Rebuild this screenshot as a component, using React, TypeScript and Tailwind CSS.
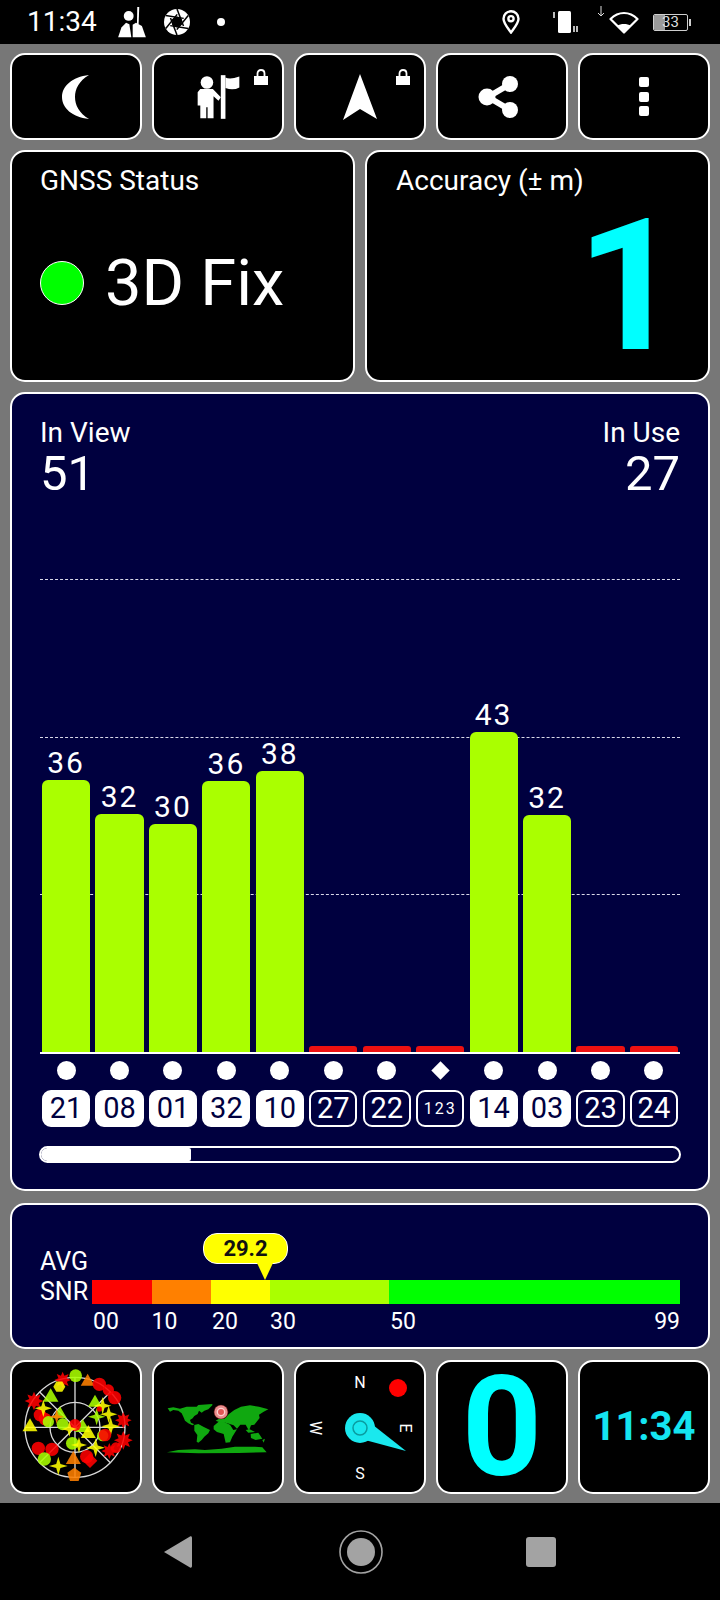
import React from "react";

const BARS = [
  { prn: "21", snr: 36, h: 272, used: true },
  { prn: "08", snr: 32, h: 238, used: true },
  { prn: "01", snr: 30, h: 228, used: true },
  { prn: "32", snr: 36, h: 271, used: true },
  { prn: "10", snr: 38, h: 281, used: true },
  { prn: "27", h: 6, used: false },
  { prn: "22", h: 6, used: false },
  { prn: "123", h: 6, used: false, diamond: true },
  { prn: "14", snr: 43, h: 320, used: true },
  { prn: "03", snr: 32, h: 237, used: true },
  { prn: "23", h: 6, used: false },
  { prn: "24", h: 6, used: false },
];

const LIME = "#aaff00";
const RED = "#ff0000";
const ORANGE = "#ff8000";
const YELLOW = "#ffff00";

type Sat = [string, number, number, number, string];

// sky plot positions, in 3x crop coordinates
const SATS: Sat[] = [
  ["c", 197, 32, 19, LIME],
  ["t", 233, 50, 24, ORANGE],
  ["x", 158, 45, 25, RED],
  ["h", 148, 65, 18, YELLOW],
  ["c", 268, 58, 20, RED],
  ["c", 295, 75, 17, RED],
  ["c", 314, 98, 20, RED],
  ["t", 122, 97, 27, LIME],
  ["x", 72, 108, 28, RED],
  ["t", 255, 113, 24, LIME],
  ["c", 90, 150, 19, RED],
  ["c", 105, 162, 19, RED],
  ["c", 115, 170, 17, LIME],
  ["t", 150, 148, 24, LIME],
  ["s", 100, 130, 26, YELLOW],
  ["s", 140, 155, 22, ORANGE],
  ["c", 158, 178, 18, LIME],
  ["t", 218, 188, 26, LIME],
  ["c", 195, 180, 18, RED],
  ["s", 178, 192, 23, YELLOW],
  ["t", 60, 186, 26, YELLOW],
  ["s", 260, 155, 26, LIME],
  ["s", 278, 122, 26, YELLOW],
  ["c", 268, 132, 8, RED],
  ["s", 296, 148, 26, YELLOW],
  ["x", 340, 166, 25, RED],
  ["s", 302, 184, 28, YELLOW],
  ["c", 278, 212, 17, LIME],
  ["c", 285, 210, 19, RED],
  ["t", 235, 206, 26, YELLOW],
  ["c", 187, 235, 19, LIME],
  ["s", 207, 240, 24, YELLOW],
  ["c", 85, 250, 20, RED],
  ["c", 126, 253, 20, RED],
  ["c", 103, 282, 20, LIME],
  ["s", 145, 303, 28, YELLOW],
  ["t", 190, 284, 26, ORANGE],
  ["p", 193, 330, 22, ORANGE],
  ["c", 230, 275, 20, RED],
  ["d", 240, 287, 22, RED],
  ["s", 257, 248, 28, YELLOW],
  ["x", 298, 258, 24, RED],
  ["c", 318, 248, 16, RED],
  ["x", 340, 226, 28, RED],
];

function polar(n: number, cx: number, cy: number, r: number, inner: number, start = -90) {
  const pts: string[] = [];
  const total = inner ? n * 2 : n;
  for (let i = 0; i < total; i++) {
    const rr = inner && i % 2 === 1 ? inner : r;
    const a = ((start + (360 / total) * i) * Math.PI) / 180;
    pts.push(`${(cx + rr * Math.cos(a)).toFixed(1)},${(cy + rr * Math.sin(a)).toFixed(1)}`);
  }
  return pts.join(" ");
}

function SatShape({ sat }: { sat: Sat }) {
  const [kind, x, y, r, color] = sat;
  if (kind === "c") return <circle cx={x} cy={y} r={r} fill={color} fillOpacity={0.88} />;
  const pts =
    kind === "t" ? polar(3, x, y, r, 0)
    : kind === "x" ? polar(8, x, y, r, r * 0.55)
    : kind === "s" ? polar(4, x, y, r, r * 0.32)
    : kind === "p" ? polar(5, x, y, r, 0)
    : kind === "h" ? polar(6, x, y, r, 0, 0)
    : polar(4, x, y, r, 0);
  return <polygon points={pts} fill={color} fillOpacity={0.88} />;
}

function SkyPlot() {
  return (
    <svg viewBox="0 0 128 130" className="h-[130px] w-[128px]">
      <g transform="translate(-2 3) scale(0.3333)" fill="none" stroke="#d8d8d8" strokeWidth="4">
        <circle cx="195" cy="187" r="150" />
        <circle cx="195" cy="187" r="75" />
        <path d="M195 37V337M45 187H345M89 81L301 293M301 81L89 293" />
        {SATS.map((s, i) => (
          <g key={i} stroke="none">
            <SatShape sat={s} />
          </g>
        ))}
      </g>
    </svg>
  );
}

function WorldMap() {
  return (
    <svg viewBox="0 0 128 130" className="h-[130px] w-[128px]">
      <g transform="translate(1 28) scale(0.3333)" fill="#10a810">
        <polygon points="38,55 55,52 75,56 95,50 125,50 130,45 172,42 172,46 160,58 148,62 140,68 132,62 128,72 118,78 113,85 105,90 108,98 118,103 112,106 100,100 90,92 85,80 80,70 70,62 55,60 45,65" />
        <polygon points="118,105 130,102 145,110 165,120 160,130 148,140 140,150 130,158 125,155 127,135 118,122" />
        <polygon points="176,108 190,96 208,96 225,104 235,120 246,118 232,140 225,157 212,158 206,132 186,126 176,118" />
        <polygon points="182,92 196,84 208,86 222,72 238,60 258,50 285,46 312,50 340,58 326,65 312,74 314,84 298,104 288,106 282,122 272,104 256,104 246,116 236,106 212,98 192,96" />
        <polygon points="287,132 310,128 322,146 302,150 288,144" />
        <polygon points="272,120 284,118 300,126 280,128" />
        <polygon points="322,150 330,146 326,158" />
        <polygon points="36,187 70,180 120,178 150,180 200,176 240,170 300,170 322,172 335,187 250,189 130,190" />
        <circle cx="198" cy="66" r="22" fill="#5a1010" />
        <circle cx="198" cy="66" r="20" fill="#e98d8d" />
        <circle cx="198" cy="66" r="13" fill="#ffd0d0" />
        <circle cx="198" cy="66" r="9" fill="#e25555" />
      </g>
    </svg>
  );
}

function Compass() {
  return (
    <svg viewBox="0 0 128 130" className="h-[130px] w-[128px]" fill="#fff" fontSize="16" textAnchor="middle">
      <text x="64" y="26">N</text>
      <text x="64" y="117">S</text>
      <text transform="translate(13.5 66) rotate(90)">W</text>
      <text transform="translate(104 66) rotate(90)">E</text>
      <circle cx="102" cy="26" r="9" fill="#ff0000" />
      <circle cx="64" cy="66" r="15" fill="#1ae8ee" />
      <polygon points="77,63 110,89 69,78" fill="#1ae8ee" />
      <circle cx="64" cy="66" r="7" fill="none" stroke="#0a9ca0" strokeWidth="1.5" />
    </svg>
  );
}

function Lock({ className }: { className: string }) {
  return (
    <svg viewBox="0 0 16 17" className={className}>
      <path d="M1 7H15V16H1Z" fill="#fff" />
      <path d="M4.5 7V4.5C4.5 2.5 6 1 8 1C10 1 11.5 2.5 11.5 4.5V7" fill="none" stroke="#fff" strokeWidth="1.8" />
    </svg>
  );
}

function Tile({ children, className = "" }: { children: React.ReactNode; className?: string }) {
  return (
    <div className={`relative flex items-center justify-center rounded-[15px] border-2 border-white bg-black ${className}`}>
      {children}
    </div>
  );
}

function StatusBar() {
  return (
    <div className="flex h-[44px] items-center bg-black pl-[27px] pr-[29px] text-white">
      <span className="text-[28px] leading-none">11:34</span>
      <svg viewBox="25 15 90 97" className="ml-[20px] h-[32px] w-[30px]" fill="#fff">
        <circle cx="60" cy="45" r="15" />
        <path d="M86 18L92 18L90 70L85 70Z" />
        <path d="M28 110L38 80L52 66L62 70L68 110Z" />
        <path d="M72 110L72 72L82 66L100 76L112 110Z" />
      </svg>
      <svg viewBox="0 0 26 26" className="ml-[17px] h-[26px] w-[26px]">
        <circle cx="13" cy="13" r="13" fill="#fff" />
        {[0, 60, 120, 180, 240, 300].map((a) => (
          <path key={a} d="M13 0L19.5 17" stroke="#000" strokeWidth="1.5" transform={`rotate(${a} 13 13)`} />
        ))}
        <polygon points={polar(6, 13, 13, 5.5, 0)} fill="#000" />
      </svg>
      <div className="ml-[27px] h-[8px] w-[8px] rounded-full bg-white" />
      <svg viewBox="0 0 18 24" className="ml-auto h-[24px] w-[18px]" fill="none" stroke="#fff" strokeWidth="2.4">
        <path d="M9 22.5C5 17 1.5 13 1.5 8.7C1.5 4.5 5 1.3 9 1.3C13 1.3 16.5 4.5 16.5 8.7C16.5 13 13 17 9 22.5Z" />
        <circle cx="9" cy="8.7" r="2.6" />
      </svg>
      <svg viewBox="0 0 25 22" className="ml-[33px] h-[22px] w-[25px]" fill="#fff">
        <rect x="5" y="0" width="13" height="22" rx="1.5" />
        <path d="M0 1H2V7H0ZM20 15H22V21H20ZM23 15H25V21H23Z" fill="#bbb" />
      </svg>
      <div className="relative ml-[31px] h-[23px] w-[30px]">
        <svg viewBox="0 0 30 23" className="h-[23px] w-[30px]">
          <path d="M15 21.5L1.5 8C5 4.5 10 2 15 2C20 2 25 4.5 28.5 8Z" fill="none" stroke="#fff" strokeWidth="2.2" strokeLinejoin="round" />
          <path d="M15 22L8 15C10 13.5 12.5 13 15 13C17.5 13 20 13.5 22 15Z" fill="#fff" />
        </svg>
        <svg viewBox="0 0 8 11" className="absolute -left-[12px] -top-[5px] h-[11px] w-[8px]" fill="none" stroke="#ddd" strokeWidth="1">
          <path d="M4 0V10M1 7L4 10L7 7" />
        </svg>
      </div>
      <div className="relative ml-[14px] flex h-[17px] w-[35px] items-center justify-center overflow-hidden rounded-[2px] border border-[#cfcfcf] text-[15px] leading-none text-[#ddd]">
        <div className="absolute inset-y-0 left-0 w-[11px] bg-[#9a9a9a]" />
        <span className="relative">33</span>
      </div>
      <div className="ml-[1px] h-[7px] w-[2px] bg-[#cfcfcf]" />
    </div>
  );
}

function TopButtons() {
  return (
    <div className="grid h-[87px] grid-cols-5 gap-[10px]">
      <Tile>
        <svg viewBox="0 0 28 44" className="h-[44px] w-[28px]" fill="#fff">
          <path d="M27 0C10 2 0 11 0 22C0 33 10 42 27 44C17 38 13 30 13 22C13 14 17 6 27 0Z" />
        </svg>
      </Tile>
      <Tile>
        <svg viewBox="140 55 130 135" className="h-[45px] w-[43px]" fill="#fff">
          <circle cx="170" cy="80" r="19" />
          <path d="M142 110L150 100H188L212 125L205 135L190 122V188H172V155H168V188H150V150H142Z" />
          <rect x="212" y="58" width="14" height="132" />
          <path d="M226 65Q240 72 268 62V95Q250 105 226 97Z" />
        </svg>
        <Lock className="absolute left-[99px] top-[14px] h-[17px] w-[16px]" />
      </Tile>
      <Tile>
        <svg viewBox="0 0 34 46" className="h-[46px] w-[34px]" fill="#fff">
          <path d="M17 0L34 45L17 35L0 46Z" />
        </svg>
        <Lock className="absolute left-[99px] top-[14px] h-[17px] w-[16px]" />
      </Tile>
      <Tile>
        <svg viewBox="0 0 42 42" className="mr-[6px] h-[42px] w-[42px]" fill="#fff" stroke="#fff">
          <path d="M32 8L10 21L32 34" fill="none" strokeWidth="6" />
          <circle cx="32" cy="8" r="8" stroke="none" />
          <circle cx="9" cy="21" r="8.5" stroke="none" />
          <circle cx="32" cy="34" r="8" stroke="none" />
        </svg>
      </Tile>
      <Tile className="flex-col gap-[4.5px]">
        <div className="h-[10px] w-[10px] rounded-[2px] bg-white" />
        <div className="h-[10px] w-[10px] rounded-[2px] bg-white" />
        <div className="h-[10px] w-[10px] rounded-[2px] bg-white" />
      </Tile>
    </div>
  );
}

function StatusCards() {
  return (
    <div className="grid h-[232px] grid-cols-2 gap-[10px]">
      <div className="rounded-[15px] border-2 border-white bg-black pl-[28px] pt-[14px] text-white">
        <div className="text-[28px] leading-[30px]">GNSS Status</div>
        <div className="mt-[65px] flex h-[44px] items-center gap-[21px]">
          <div className="h-[44px] w-[44px] rounded-full border border-white bg-[#00ff00]" />
          <span className="text-[65px] leading-[44px]">3D Fix</span>
        </div>
      </div>
      <div className="rounded-[15px] border-2 border-white bg-black pl-[29px] pt-[14px] text-white">
        <div className="text-[28px] leading-[30px]">Accuracy (± m)</div>
        <div className="mt-[5px] flex justify-end pr-[26px] text-[184px] font-bold leading-[170px] text-[#00ffff]">1</div>
      </div>
    </div>
  );
}

function SatelliteChart() {
  return (
    <div className="h-[799px] rounded-[15px] border-2 border-white bg-[#00003f] px-[28px] pt-[24px] text-white">
      <div className="flex justify-between">
        <div>
          <div className="text-[28px] leading-[30px]">In View</div>
          <div className="text-[49px] leading-[52px]">51</div>
        </div>
        <div className="text-right">
          <div className="text-[28px] leading-[30px]">In Use</div>
          <div className="text-[49px] leading-[52px]">27</div>
        </div>
      </div>
      <div className="relative mt-[79px] h-[475px] border-b-2 border-white">
        <div className="absolute inset-0 flex flex-col">
          <div className="flex-1 border-t border-dashed border-[#d8d8e8]" />
          <div className="flex-1 border-t border-dashed border-[#d8d8e8]" />
          <div className="flex-1 border-t border-dashed border-[#d8d8e8]" />
        </div>
        <div className="absolute inset-0 grid grid-cols-12 gap-[5.3px] px-[2px]">
          {BARS.map((b) => (
            <div key={b.prn} className="flex flex-col justify-end">
              {b.snr && <div className="mb-[1px] text-center text-[30px] leading-[32px] tracking-[2px]">{b.snr}</div>}
              <div style={{ height: b.h }} className={b.used ? "rounded-t-[6px] bg-[#aaff00]" : "rounded-t-[3px] bg-[#ee1111]"} />
            </div>
          ))}
        </div>
      </div>
      <div className="mt-[7px] grid grid-cols-12 gap-[5.3px] px-[2px]">
        {BARS.map((b) => (
          <div key={b.prn} className="flex h-[19px] items-center justify-center">
            {b.diamond ? <div className="h-[13px] w-[13px] rotate-45 bg-white" /> : <div className="h-[19px] w-[19px] rounded-full bg-white" />}
          </div>
        ))}
      </div>
      <div className="mt-[10px] grid grid-cols-12 gap-[5.3px] px-[2px]">
        {BARS.map((b) => (
          <div
            key={b.prn}
            className={`flex h-[37px] items-center justify-center rounded-[9px] border-2 border-white leading-none ${b.used ? "bg-white text-[#00003f]" : "text-white"} ${b.prn.length > 2 ? "text-[16px] tracking-[2px]" : "text-[29px]"}`}
          >
            {b.prn}
          </div>
        ))}
      </div>
      <div className="-mx-[1px] mt-[19px] h-[17px] overflow-hidden rounded-full border-2 border-white">
        <div className="h-full w-[150px] rounded-r-[2px] bg-white" />
      </div>
    </div>
  );
}

function SnrCard() {
  return (
    <div className="h-[146px] rounded-[15px] border-2 border-white bg-[#00003f] px-[28px] pt-[43px] text-[25px] leading-[28px] text-white">
      <div className="h-[32px]">AVG</div>
      <div className="flex h-[24px] items-center">
        <div className="w-[52px]">SNR</div>
        <div className="relative flex h-full flex-1">
          <div className="w-[59.5px] bg-[#ff0000]" />
          <div className="w-[59.5px] bg-[#ff8000]" />
          <div className="w-[59px] bg-[#ffff00]" />
          <div className="w-[119px] bg-[#aaff00]" />
          <div className="flex-1 bg-[#00ff00]" />
          <div className="absolute -top-[47px] left-[111px] flex h-[31px] w-[85px] items-center justify-center rounded-[14px] border border-white bg-[#ffff00] text-[22px] font-bold leading-none text-[#111]">
            29.2
          </div>
          <svg viewBox="0 0 16 18" className="absolute -top-[17px] left-[165px] h-[18px] w-[16px]" fill="#ffff00">
            <path d="M0 0H16L8 17Z" />
          </svg>
        </div>
      </div>
      <div className="ml-[52px] mt-[6px] flex text-[23px] leading-[24px]">
        <div className="w-[59.5px] pl-[1px]">00</div>
        <div className="w-[59.5px]">10</div>
        <div className="w-[59px] pl-[1px]">20</div>
        <div className="w-[119px]">30</div>
        <div className="flex flex-1 justify-between pl-[1px]">
          <span>50</span>
          <span>99</span>
        </div>
      </div>
    </div>
  );
}

function BottomTiles() {
  return (
    <div className="grid h-[134px] grid-cols-5 gap-[10px]">
      <Tile><SkyPlot /></Tile>
      <Tile><WorldMap /></Tile>
      <Tile><Compass /></Tile>
      <Tile>
        <span className="text-[140px] font-bold leading-[130px] text-[#00ffff]">0</span>
      </Tile>
      <Tile>
        <span className="text-[40px] font-bold leading-none text-[#14e4f0]">11:34</span>
      </Tile>
    </div>
  );
}

function NavBar() {
  return (
    <div className="flex flex-1 items-center justify-center bg-black">
      <svg viewBox="0 0 28 32" className="h-[32px] w-[28px]" fill="#a3a3a3">
        <path d="M0 16L26 0.5C27 0 28 0.5 28 2V30C28 31.5 27 32 26 31.5Z" />
      </svg>
      <svg viewBox="0 0 44 44" className="ml-[147px] h-[44px] w-[44px]">
        <circle cx="22" cy="22" r="21" fill="none" stroke="#a3a3a3" strokeWidth="1.6" />
        <circle cx="22" cy="22" r="14" fill="#a3a3a3" />
      </svg>
      <div className="ml-[143px] h-[30px] w-[30px] rounded-[3px] bg-[#a3a3a3]" />
    </div>
  );
}

export default function App() {
  return (
    <div className="flex h-[1600px] w-[720px] flex-col overflow-hidden bg-black font-['Roboto',sans-serif]">
      <StatusBar />
      <div className="flex flex-col bg-[#777777] px-[10px] pb-[9px] pt-[9px]">
        <TopButtons />
        <div className="mt-[10px]"><StatusCards /></div>
        <div className="mt-[10px]"><SatelliteChart /></div>
        <div className="mt-[12px]"><SnrCard /></div>
        <div className="mt-[11px]"><BottomTiles /></div>
      </div>
      <NavBar />
    </div>
  );
}
